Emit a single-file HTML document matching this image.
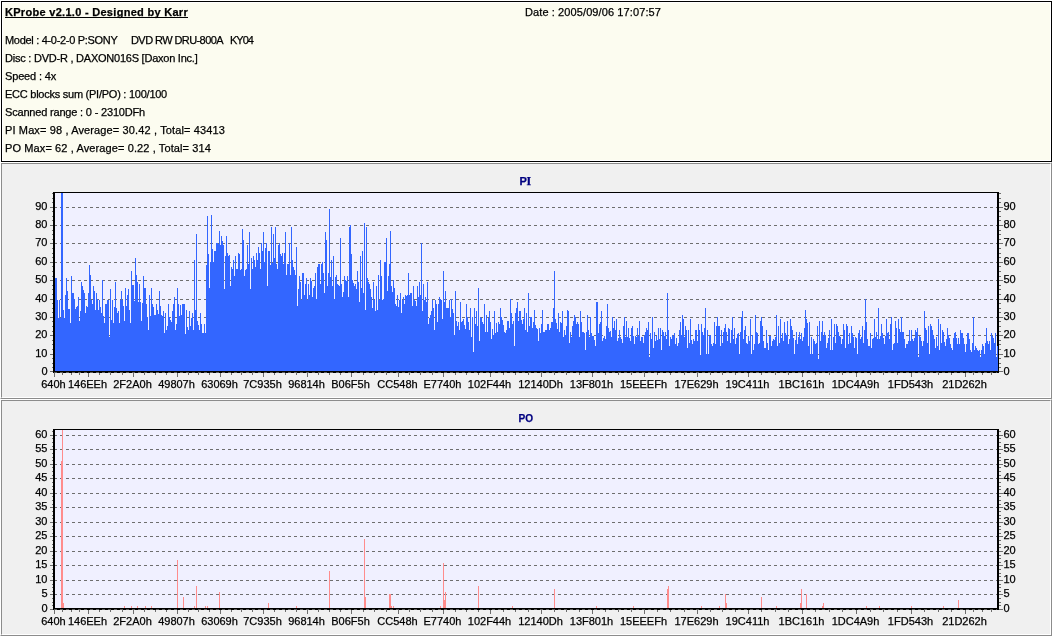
<!DOCTYPE html>
<html lang="en">
<head>
<meta charset="utf-8">
<title>KProbe v2.1.0</title>
<style>
html,body{margin:0;padding:0;}
body{width:1052px;height:636px;overflow:hidden;background:#f0f0f0;position:relative;
 font-family:"Liberation Sans",Arial,sans-serif;font-size:11px;color:#000;}
#info{position:absolute;left:0;top:0;width:1052px;height:162px;background:#fff;}
#info .box{position:absolute;left:1px;top:1px;width:1051px;height:161px;box-sizing:border-box;border:1px solid #000;
 background:#fcfcf0;box-shadow:inset 0 0 0 1px #fff;}
.ln{position:absolute;white-space:pre;line-height:14px;height:14px;-webkit-text-stroke:0.25px #000;will-change:transform;}
#ul{position:absolute;left:5px;top:17px;width:183px;height:1px;background:#000;}
.pane{position:absolute;left:0;width:1052px;height:237px;box-sizing:border-box;background:#f0f0f0;
 border-left:1px solid #fff;border-top:1px solid #fff;border-right:1px solid #8c8c8c;border-bottom:1px solid #8c8c8c;}
.pane i{display:block;width:100%;height:100%;box-sizing:border-box;
 border-left:1px solid #8c8c8c;border-top:1px solid #8c8c8c;border-right:1px solid #fff;border-bottom:1px solid #fff;}
#p1{top:162px;}
#p2{top:399px;}
svg{position:absolute;left:0;top:0;transform:translateZ(0);}
svg text{font-family:"Liberation Sans",Arial,sans-serif;font-size:11px;fill:#000;stroke:#000;stroke-width:0.25px;}
svg path,svg rect{shape-rendering:crispEdges;}
</style>
</head>
<body>
<div id="info"><div class="box"></div>
<div class="ln" style="left:5px;top:5px;letter-spacing:0.293px;font-weight:bold;">KProbe v2.1.0 - Designed by Karr</div>
<div class="ln" style="left:525px;top:5px;letter-spacing:0.102px;">Date : 2005/09/06 17:07:57</div>
<div class="ln" style="left:5px;top:33px;letter-spacing:-0.305px;">Model : 4-0-2-0 P:SONY</div>
<div class="ln" style="left:130.5px;top:33px;letter-spacing:-0.577px;">DVD RW DRU-800A</div>
<div class="ln" style="left:230px;top:33px;letter-spacing:-0.980px;">KY04</div>
<div class="ln" style="left:5px;top:51px;letter-spacing:-0.233px;">Disc : DVD-R , DAXON016S [Daxon Inc.]</div>
<div class="ln" style="left:5px;top:69px;letter-spacing:-0.159px;">Speed : 4x</div>
<div class="ln" style="left:5px;top:87px;letter-spacing:-0.249px;">ECC blocks sum (PI/PO) : 100/100</div>
<div class="ln" style="left:5px;top:105px;letter-spacing:-0.183px;">Scanned range : 0 - 2310DFh</div>
<div class="ln" style="left:5px;top:123px;letter-spacing:0.129px;">PI Max= 98 , Average= 30.42 , Total= 43413</div>
<div class="ln" style="left:5px;top:141px;letter-spacing:0.110px;">PO Max= 62 , Average= 0.22 , Total= 314</div>
<div id="ul"></div>
</div>
<div class="pane" id="p1"><i></i></div>
<div class="pane" id="p2"><i></i></div>
<svg width="1052" height="636" viewBox="0 0 1052 636">
<rect x="55" y="193" width="942" height="178" fill="#f0f0ff"/>
<path d="M54,354.5H997M54,335.5H997M54,317.5H997M54,299.5H997M54,280.5H997M54,262.5H997M54,243.5H997M54,225.5H997M54,207.5H997" stroke="#6e6e6e" stroke-width="1" stroke-dasharray="3 3" fill="none"/>
<path d="M55,371V278H57V300H58V318H59V300H60V318H61V193H63V310H64V318H65V295H66V278H67V291H68V309H70V323H71V276H72V293H74V299H75V309H76V307H77V306H78V297H79V321H80V311H81V282H82V286H83V290H84V293H85V313H86V306H87V307H88V293H89V265H90V275H91V300H92V304H93V286H94V291H95V310H96V293H97V299H98V310H99V300H100V307H101V313H102V280H103V316H104V323H105V304H107V300H109V337H110V289H111V320H112V300H113V323H114V307H115V282H116V308H117V313H118V311H119V323H120V300H121V291H122V300H123V306H124V321H125V288H126V306H127V295H128V289H129V310H130V323H131V271H132V285H134V301H135V258H136V275H137V282H138V302H139V284H140V302H141V321H142V303H143V276H144V288H146V304H147V317H148V330H149V295H150V316H151V288H152V304H153V307H154V315H156V304H157V310H158V314H159V291H160V306H161V315H162V316H163V311H164V333H165V313H166V330H167V326H168V304H169V317H170V320H171V322H172V311H173V304H174V297H175V330H176V324H177V288H178V304H179V316H180V305H181V315H182V304H185V334H186V310H187V327H188V330H189V311H190V326H191V318H192V313H193V330H194V260H195V310H196V234H197V321H198V325H199V330H200V313H201V324H202V333H204V324H205V333H206V265H207V216H208V254H209V288H210V262H211V215H212V249H213V262H214V251H216V243H218V244H219V231H220V245H221V236H222V241H223V245H224V289H225V256H226V236H227V253H228V256H229V255H230V286H231V267H232V269H233V260H234V276H235V256H236V269H238V253H239V254H240V270H241V269H242V229H243V240H244V276H245V270H246V269H247V245H248V264H249V232H250V289H251V258H252V269H253V256H254V260H255V267H256V253H257V260H258V247H259V253H260V269H261V243H262V251H263V232H264V262H265V248H266V243H267V286H268V251H270V265H271V227H272V263H273V234H274V258H275V227H276V264H277V269H278V245H279V243H280V254H281V256H282V253H283V264H284V253H285V232H286V275H287V264H289V243H290V275H291V227H292V260H293V267H294V270H295V275H296V247H297V306H298V289H299V276H300V282H301V300H302V273H304V295H305V284H306V278H307V300H308V284H309V295H310V278H311V281H312V297H313V288H314V286H315V273H316V299H317V267H318V264H320V284H321V264H322V262H323V273H324V293H325V232H326V240H327V286H328V273H329V209H330V277H331V260H332V286H333V256H334V299H335V277H336V275H337V284H338V285H339V286H340V238H341V284H342V297H343V292H344V276H345V280H346V281H347V276H348V297H349V227H350V225H351V254H352V280H353V283H354V286H355V284H356V289H357V271H358V282H359V302H360V256H361V288H362V251H363V293H364V223H365V310H366V227H367V278H368V282H369V284H370V289H371V297H372V308H373V282H374V300H375V311H376V286H377V310H378V275H379V300H380V260H381V276H382V300H383V299H384V262H386V238H387V291H388V276H389V264H390V231H391V286H392V292H393V280H394V288H395V304H396V306H397V295H398V307H399V300H400V293H401V313H402V300H403V297H404V304H405V295H406V296H407V295H408V273H409V295H410V293H412V306H413V286H414V300H415V301H416V306H417V286H418V297H419V282H420V295H421V243H422V311H423V284H424V300H425V297H426V302H427V282H428V324H429V318H430V315H431V311H432V300H433V308H434V330H435V300H436V304H437V322H438V304H439V297H440V299H441V300H442V319H443V271H444V302H445V291H446V308H449V300H450V317H451V299H452V309H453V313H454V335H455V291H456V321H457V326H458V322H459V330H460V302H461V322H462V321H463V319H464V325H465V329H466V304H467V317H468V322H469V330H470V308H471V337H472V317H473V352H474V308H475V324H476V311H477V326H478V288H479V341H480V317H481V318H482V322H483V324H484V304H485V332H486V315H487V332H488V318H489V311H490V322H491V339H492V329H493V335H494V311H495V333H496V323H497V332H498V322H499V324H500V308H501V317H502V320H503V325H504V332H505V333H506V330H507V321H509V328H510V299H511V313H512V324H513V321H514V346H515V313H516V308H517V302H518V321H519V311H521V320H522V324H523V319H524V308H525V330H526V313H527V332H528V293H529V326H530V317H532V328H533V322H534V310H535V325H536V328H537V329H538V341H539V328H540V333H541V324H542V310H543V332H545V330H547V324H549V330H550V328H551V322H553V308H554V271H555V319H556V323H557V329H558V313H559V332H560V322H561V323H562V311H563V337H564V330H565V335H566V326H567V310H568V311H569V343H570V332H571V337H572V326H573V321H574V315H575V317H576V324H577V322H578V324H579V337H580V311H581V322H582V332H584V333H585V350H586V332H587V315H588V330H589V337H590V317H591V333H592V336H594V340H595V346H596V302H598V333H599V324H600V322H601V311H602V341H603V338H604V336H605V339H606V326H607V304H608V328H609V332H610V331H611V337H612V317H613V328H614V321H615V330H616V319H617V341H618V338H619V330H620V337H621V339H622V343H623V326H624V317H625V337H626V321H627V337H628V328H629V338H630V341H631V328H632V326H633V336H634V344H635V336H636V337H637V328H638V336H639V321H640V341H641V337H643V343H644V335H645V332H646V328H647V330H648V322H649V357H650V333H651V339H652V317H653V348H654V332H655V341H656V336H657V340H658V328H659V339H660V328H661V350H662V330H663V332H664V336H665V332H666V339H667V293H668V330H669V346H670V337H671V339H672V335H673V336H674V333H675V344H676V338H677V346H678V343H679V330H680V322H681V335H682V315H683V319H684V337H685V326H686V330H687V348H688V330H689V343H690V319H691V340H692V344H693V339H694V341H695V330H697V341H698V324H699V330H700V355H701V324H702V332H703V335H704V328H705V308H706V354H707V330H708V354H709V336H710V335H711V344H712V346H713V343H714V322H715V344H716V326H717V317H718V326H720V346H721V330H722V343H723V332H724V328H725V324H726V332H727V341H728V328H729V329H730V343H731V330H732V317H733V339H734V328H735V344H736V338H737V334H738V333H739V354H740V332H741V317H742V311H743V339H744V330H745V326H746V343H747V344H748V336H749V341H750V319H751V354H752V335H753V350H754V344H755V315H756V332H757V333H758V344H759V343H760V321H761V317H762V326H763V341H764V348H766V330H767V343H768V350H769V336H771V346H772V341H773V339H774V340H775V337H776V315H777V346H778V326H779V343H780V319H781V338H782V333H783V341H784V322H785V333H786V335H787V321H788V344H789V339H790V319H791V326H792V330H793V338H794V354H795V340H796V332H797V344H798V337H799V332H800V339H801V333H802V341H803V337H804V328H805V310H806V319H807V323H808V346H809V322H810V354H811V337H812V354H813V339H814V341H815V344H816V343H817V326H818V359H819V321H820V341H821V332H822V321H823V336H824V332H825V335H826V348H827V343H828V338H829V330H830V350H831V319H832V350H833V337H834V324H835V343H836V324H837V326H838V332H839V336H840V337H841V344H842V339H843V324H844V330H845V348H846V324H847V326H848V344H849V333H850V343H851V326H852V333H853V337H854V348H855V337H856V338H857V354H858V333H859V330H860V339H861V337H862V326H863V343H864V330H865V299H866V322H867V339H868V346H870V333H871V348H872V339H873V338H874V319H875V337H876V332H877V339H878V308H879V339H880V336H881V324H882V333H883V338H884V344H885V336H886V319H887V333H888V332H889V339H890V324H891V317H892V350H893V344H894V343H895V321H896V328H897V343H898V319H899V329H900V332H901V317H902V332H904V339H905V348H906V344H908V341H909V330H910V341H911V330H912V339H913V341H914V338H915V330H916V332H917V328H918V357H919V336H920V337H921V341H922V346H923V341H924V311H925V328H926V330H927V343H928V326H929V354H930V324H931V326H932V330H933V335H934V339H935V348H936V337H937V346H938V319H939V350H940V324H941V343H942V330H943V332H944V342H945V346H946V339H947V328H948V335H949V338H950V344H951V348H952V350H953V338H954V333H955V332H956V338H957V344H958V338H959V344H960V330H961V333H963V338H964V344H965V352H966V344H967V333H969V339H970V350H971V352H972V343H973V317H974V350H975V346H976V348H977V350H978V351H979V350H980V357H981V350H982V344H983V346H984V354H985V343H986V328H987V341H988V344H989V341H990V350H991V333H992V336H993V338H994V343H995V333H996V357H997V371Z" fill="#3366ff"/>
<rect x="53" y="192" width="946" height="1" fill="#000"/>
<rect x="53" y="192" width="2" height="181" fill="#000"/>
<rect x="997" y="192" width="2" height="181" fill="#000"/>
<rect x="53" y="371" width="946" height="2" fill="#000"/>
<rect x="997" y="346" width="1" height="25" fill="#3366ff"/>
<path d="M54,372.5H997" stroke="#5a5a5a" stroke-width="1" stroke-dasharray="3 3" fill="none"/>
<path d="M50,371.5h3M999,371.5h4M52,367.5h1M999,367.5h2M52,363.5h1M999,363.5h2M52,358.5h1M999,358.5h2M50,354.5h3M999,354.5h4M52,349.5h1M999,349.5h2M52,344.5h1M999,344.5h2M52,340.5h1M999,340.5h2M50,335.5h3M999,335.5h4M52,331.5h1M999,331.5h2M52,326.5h1M999,326.5h2M52,321.5h1M999,321.5h2M50,317.5h3M999,317.5h4M52,312.5h1M999,312.5h2M52,308.5h1M999,308.5h2M52,303.5h1M999,303.5h2M50,299.5h3M999,299.5h4M52,294.5h1M999,294.5h2M52,289.5h1M999,289.5h2M52,285.5h1M999,285.5h2M50,280.5h3M999,280.5h4M52,276.5h1M999,276.5h2M52,271.5h1M999,271.5h2M52,266.5h1M999,266.5h2M50,262.5h3M999,262.5h4M52,257.5h1M999,257.5h2M52,253.5h1M999,253.5h2M52,248.5h1M999,248.5h2M50,243.5h3M999,243.5h4M52,239.5h1M999,239.5h2M52,234.5h1M999,234.5h2M52,230.5h1M999,230.5h2M50,225.5h3M999,225.5h4M52,220.5h1M999,220.5h2M52,216.5h1M999,216.5h2M52,211.5h1M999,211.5h2M50,207.5h3M999,207.5h4M52,202.5h1M999,202.5h2M52,198.5h1M999,198.5h2M52,193.5h1M999,193.5h2M54.5,373v4M62.5,373v2M71.5,373v2M79.5,373v2M88.5,373v4M99.5,373v2M110.5,373v2M122.5,373v2M133.5,373v4M144.5,373v2M155.5,373v2M166.5,373v2M177.5,373v4M188.5,373v2M198.5,373v2M209.5,373v2M220.5,373v4M231.5,373v2M241.5,373v2M252.5,373v2M263.5,373v4M274.5,373v2M285.5,373v2M296.5,373v2M307.5,373v4M318.5,373v2M329.5,373v2M340.5,373v2M351.5,373v4M363.5,373v2M374.5,373v2M386.5,373v2M398.5,373v4M409.5,373v2M420.5,373v2M432.5,373v2M443.5,373v4M455.5,373v2M466.5,373v2M478.5,373v2M490.5,373v4M503.5,373v2M515.5,373v2M528.5,373v2M541.5,373v4M554.5,373v2M566.5,373v2M579.5,373v2M592.5,373v4M605.5,373v2M618.5,373v2M631.5,373v2M644.5,373v4M657.5,373v2M670.5,373v2M684.5,373v2M697.5,373v4M710.5,373v2M722.5,373v2M735.5,373v2M748.5,373v4M761.5,373v2M775.5,373v2M788.5,373v2M802.5,373v4M815.5,373v2M829.5,373v2M842.5,373v2M856.5,373v4M870.5,373v2M883.5,373v2M897.5,373v2M911.5,373v4M924.5,373v2M938.5,373v2M951.5,373v2M965.5,373v4M973.5,373v2M982.5,373v2M991.5,373v2" stroke="#6e6e6e" stroke-width="1" fill="none"/>
<text x="47.5" y="374.5" text-anchor="end">0</text>
<text x="1003.5" y="374.5">0</text>
<text x="47.5" y="357" text-anchor="end">10</text>
<text x="1003.5" y="357">10</text>
<text x="47.5" y="338" text-anchor="end">20</text>
<text x="1003.5" y="338">20</text>
<text x="47.5" y="320" text-anchor="end">30</text>
<text x="1003.5" y="320">30</text>
<text x="47.5" y="302" text-anchor="end">40</text>
<text x="1003.5" y="302">40</text>
<text x="47.5" y="283" text-anchor="end">50</text>
<text x="1003.5" y="283">50</text>
<text x="47.5" y="265" text-anchor="end">60</text>
<text x="1003.5" y="265">60</text>
<text x="47.5" y="246" text-anchor="end">70</text>
<text x="1003.5" y="246">70</text>
<text x="47.5" y="228" text-anchor="end">80</text>
<text x="1003.5" y="228">80</text>
<text x="47.5" y="210" text-anchor="end">90</text>
<text x="1003.5" y="210">90</text>
<text x="53.5" y="388" text-anchor="middle">640h</text>
<text x="87.5" y="388" text-anchor="middle">146EEh</text>
<text x="132.5" y="388" text-anchor="middle">2F2A0h</text>
<text x="176.5" y="388" text-anchor="middle">49807h</text>
<text x="219.5" y="388" text-anchor="middle">63069h</text>
<text x="262.5" y="388" text-anchor="middle">7C935h</text>
<text x="306.5" y="388" text-anchor="middle">96814h</text>
<text x="350.5" y="388" text-anchor="middle">B06F5h</text>
<text x="397.5" y="388" text-anchor="middle">CC548h</text>
<text x="442.5" y="388" text-anchor="middle">E7740h</text>
<text x="489.5" y="388" text-anchor="middle">102F44h</text>
<text x="540.5" y="388" text-anchor="middle">12140Dh</text>
<text x="591.5" y="388" text-anchor="middle">13F801h</text>
<text x="643.5" y="388" text-anchor="middle">15EEEFh</text>
<text x="696.5" y="388" text-anchor="middle">17E629h</text>
<text x="747.5" y="388" text-anchor="middle">19C411h</text>
<text x="801.5" y="388" text-anchor="middle">1BC161h</text>
<text x="855.5" y="388" text-anchor="middle">1DC4A9h</text>
<text x="910.5" y="388" text-anchor="middle">1FD543h</text>
<text x="964.5" y="388" text-anchor="middle">21D262h</text>
<text x="519.6" y="185" style="font-weight:bold;fill:#000080;stroke:#000080">P<tspan x="526.6" style="font-family:'Liberation Serif',serif;font-size:12px">I</tspan></text>
<rect x="55" y="430" width="942" height="178" fill="#f0f0ff"/>
<path d="M54,594.5H997M54,580.5H997M54,565.5H997M54,551.5H997M54,536.5H997M54,522.5H997M54,507.5H997M54,493.5H997M54,478.5H997M54,464.5H997M54,449.5H997M54,435.5H997" stroke="#6e6e6e" stroke-width="1" stroke-dasharray="3 3" fill="none"/>
<path d="M61,608V461h1V608zM62,608V430h1V608zM63,608V603h1V608zM124,608V606h1V608zM131,608V606h1V608zM137,608V606h1V608zM145,608V606h1V608zM151,608V606h1V608zM177,608V560h1V608zM183,608V597h1V608zM194,608V606h1V608zM196,608V586h1V608zM205,608V606h1V608zM207,608V606h1V608zM219,608V592h1V608zM268,608V603h1V608zM296,608V606h1V608zM329,608V571h1V608zM364,608V539h1V608zM365,608V597h1V608zM389,608V594h1V608zM390,608V594h1V608zM391,608V606h1V608zM393,608V606h1V608zM440,608V606h1V608zM443,608V563h1V608zM444,608V600h1V608zM445,608V592h1V608zM478,608V586h1V608zM512,608V606h1V608zM554,608V589h1V608zM596,608V606h1V608zM633,608V606h1V608zM667,608V589h1V608zM668,608V586h1V608zM701,608V606h1V608zM719,608V606h1V608zM725,608V594h1V608zM726,608V603h1V608zM761,608V597h1V608zM776,608V606h1V608zM800,608V603h1V608zM801,608V589h1V608zM806,608V594h1V608zM822,608V606h1V608zM823,608V603h1V608zM866,608V606h1V608zM879,608V606h1V608zM911,608V606h1V608zM943,608V606h1V608zM958,608V600h1V608z" fill="#ff8c8c"/>
<rect x="53" y="429" width="946" height="1" fill="#000"/>
<rect x="53" y="429" width="2" height="181" fill="#000"/>
<rect x="997" y="429" width="2" height="181" fill="#000"/>
<rect x="53" y="608" width="946" height="2" fill="#000"/>
<path d="M54,609.5H997" stroke="#5a5a5a" stroke-width="1" stroke-dasharray="3 3" fill="none"/>
<path d="M50,609.5h3M999,609.5h4M52,605.5h1M999,605.5h2M52,602.5h1M999,602.5h2M52,598.5h1M999,598.5h2M50,594.5h3M999,594.5h4M52,591.5h1M999,591.5h2M52,587.5h1M999,587.5h2M52,584.5h1M999,584.5h2M50,580.5h3M999,580.5h4M52,576.5h1M999,576.5h2M52,573.5h1M999,573.5h2M52,569.5h1M999,569.5h2M50,565.5h3M999,565.5h4M52,562.5h1M999,562.5h2M52,558.5h1M999,558.5h2M52,555.5h1M999,555.5h2M50,551.5h3M999,551.5h4M52,547.5h1M999,547.5h2M52,544.5h1M999,544.5h2M52,540.5h1M999,540.5h2M50,536.5h3M999,536.5h4M52,533.5h1M999,533.5h2M52,529.5h1M999,529.5h2M52,526.5h1M999,526.5h2M50,522.5h3M999,522.5h4M52,518.5h1M999,518.5h2M52,515.5h1M999,515.5h2M52,511.5h1M999,511.5h2M50,507.5h3M999,507.5h4M52,504.5h1M999,504.5h2M52,500.5h1M999,500.5h2M52,496.5h1M999,496.5h2M50,493.5h3M999,493.5h4M52,489.5h1M999,489.5h2M52,486.5h1M999,486.5h2M52,482.5h1M999,482.5h2M50,478.5h3M999,478.5h4M52,475.5h1M999,475.5h2M52,471.5h1M999,471.5h2M52,467.5h1M999,467.5h2M50,464.5h3M999,464.5h4M52,460.5h1M999,460.5h2M52,457.5h1M999,457.5h2M52,453.5h1M999,453.5h2M50,449.5h3M999,449.5h4M52,446.5h1M999,446.5h2M52,442.5h1M999,442.5h2M52,438.5h1M999,438.5h2M50,435.5h3M999,435.5h4M52,431.5h1M999,431.5h2M54.5,610v4M62.5,610v2M71.5,610v2M79.5,610v2M88.5,610v4M99.5,610v2M110.5,610v2M122.5,610v2M133.5,610v4M144.5,610v2M155.5,610v2M166.5,610v2M177.5,610v4M188.5,610v2M198.5,610v2M209.5,610v2M220.5,610v4M231.5,610v2M241.5,610v2M252.5,610v2M263.5,610v4M274.5,610v2M285.5,610v2M296.5,610v2M307.5,610v4M318.5,610v2M329.5,610v2M340.5,610v2M351.5,610v4M363.5,610v2M374.5,610v2M386.5,610v2M398.5,610v4M409.5,610v2M420.5,610v2M432.5,610v2M443.5,610v4M455.5,610v2M466.5,610v2M478.5,610v2M490.5,610v4M503.5,610v2M515.5,610v2M528.5,610v2M541.5,610v4M554.5,610v2M566.5,610v2M579.5,610v2M592.5,610v4M605.5,610v2M618.5,610v2M631.5,610v2M644.5,610v4M657.5,610v2M670.5,610v2M684.5,610v2M697.5,610v4M710.5,610v2M722.5,610v2M735.5,610v2M748.5,610v4M761.5,610v2M775.5,610v2M788.5,610v2M802.5,610v4M815.5,610v2M829.5,610v2M842.5,610v2M856.5,610v4M870.5,610v2M883.5,610v2M897.5,610v2M911.5,610v4M924.5,610v2M938.5,610v2M951.5,610v2M965.5,610v4M973.5,610v2M982.5,610v2M991.5,610v2" stroke="#6e6e6e" stroke-width="1" fill="none"/>
<text x="47.5" y="612" text-anchor="end">0</text>
<text x="1003.5" y="612">0</text>
<text x="47.5" y="597" text-anchor="end">5</text>
<text x="1003.5" y="597">5</text>
<text x="47.5" y="583" text-anchor="end">10</text>
<text x="1003.5" y="583">10</text>
<text x="47.5" y="568" text-anchor="end">15</text>
<text x="1003.5" y="568">15</text>
<text x="47.5" y="554" text-anchor="end">20</text>
<text x="1003.5" y="554">20</text>
<text x="47.5" y="539" text-anchor="end">25</text>
<text x="1003.5" y="539">25</text>
<text x="47.5" y="525" text-anchor="end">30</text>
<text x="1003.5" y="525">30</text>
<text x="47.5" y="510" text-anchor="end">35</text>
<text x="1003.5" y="510">35</text>
<text x="47.5" y="496" text-anchor="end">40</text>
<text x="1003.5" y="496">40</text>
<text x="47.5" y="481" text-anchor="end">45</text>
<text x="1003.5" y="481">45</text>
<text x="47.5" y="467" text-anchor="end">50</text>
<text x="1003.5" y="467">50</text>
<text x="47.5" y="452" text-anchor="end">55</text>
<text x="1003.5" y="452">55</text>
<text x="47.5" y="438" text-anchor="end">60</text>
<text x="1003.5" y="438">60</text>
<text x="53.5" y="625" text-anchor="middle">640h</text>
<text x="87.5" y="625" text-anchor="middle">146EEh</text>
<text x="132.5" y="625" text-anchor="middle">2F2A0h</text>
<text x="176.5" y="625" text-anchor="middle">49807h</text>
<text x="219.5" y="625" text-anchor="middle">63069h</text>
<text x="262.5" y="625" text-anchor="middle">7C935h</text>
<text x="306.5" y="625" text-anchor="middle">96814h</text>
<text x="350.5" y="625" text-anchor="middle">B06F5h</text>
<text x="397.5" y="625" text-anchor="middle">CC548h</text>
<text x="442.5" y="625" text-anchor="middle">E7740h</text>
<text x="489.5" y="625" text-anchor="middle">102F44h</text>
<text x="540.5" y="625" text-anchor="middle">12140Dh</text>
<text x="591.5" y="625" text-anchor="middle">13F801h</text>
<text x="643.5" y="625" text-anchor="middle">15EEEFh</text>
<text x="696.5" y="625" text-anchor="middle">17E629h</text>
<text x="747.5" y="625" text-anchor="middle">19C411h</text>
<text x="801.5" y="625" text-anchor="middle">1BC161h</text>
<text x="855.5" y="625" text-anchor="middle">1DC4A9h</text>
<text x="910.5" y="625" text-anchor="middle">1FD543h</text>
<text x="964.5" y="625" text-anchor="middle">21D262h</text>
<text x="518.6" y="422" textLength="14.6" lengthAdjust="spacingAndGlyphs" style="font-weight:bold;fill:#000080;stroke:#000080">PO</text>
</svg>
</body>
</html>
